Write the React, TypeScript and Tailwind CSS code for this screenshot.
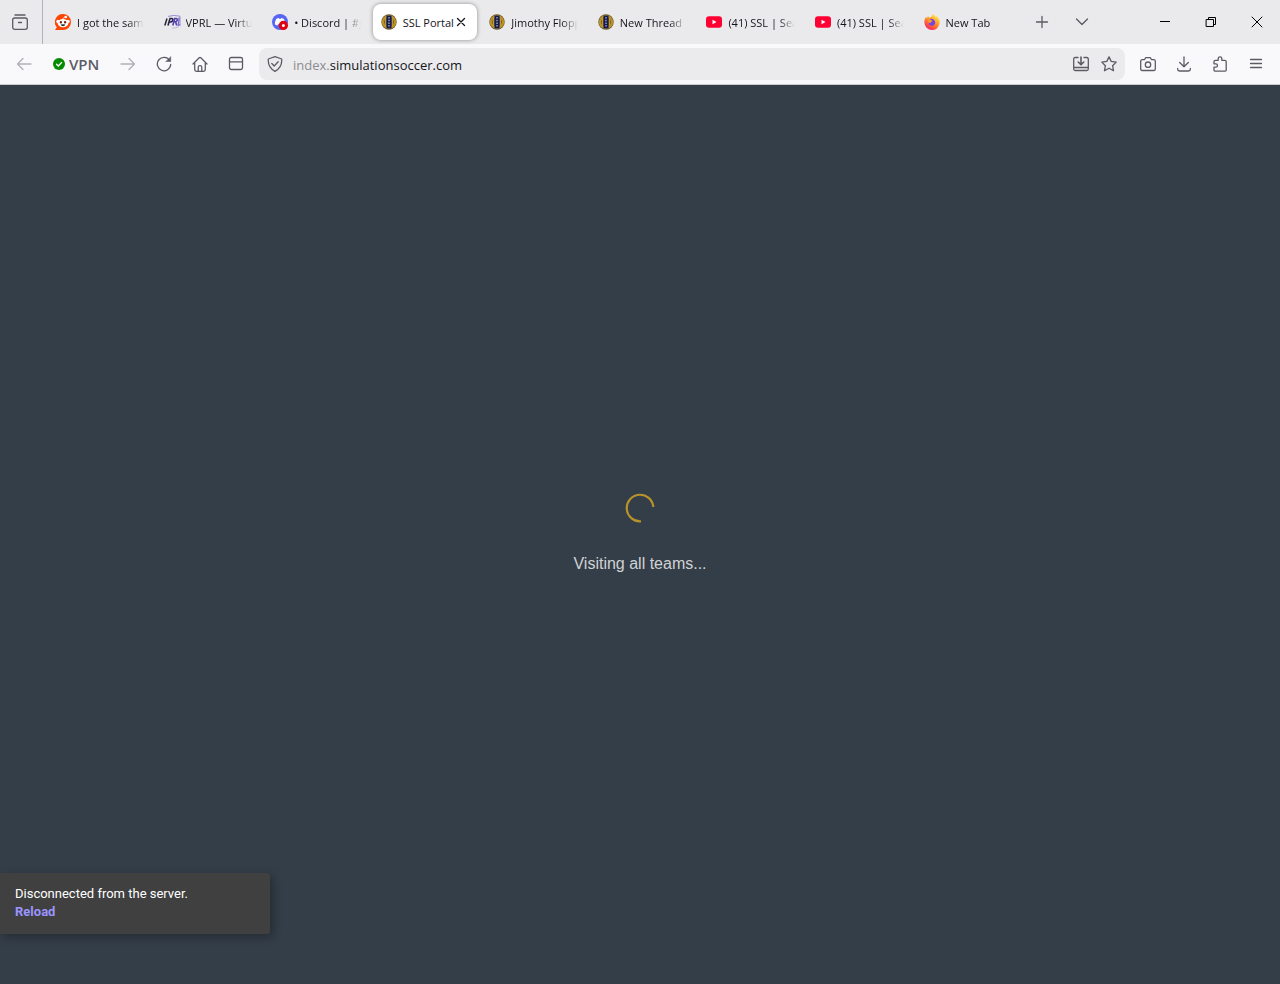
import type { ReactNode } from "react";

function RedditIcon() {
  return (
    <svg width="16" height="16" viewBox="0 0 16 16" className="shrink-0">
      <path d="M8 0a8 8 0 1 1 0 16H.6c-.4 0-.5-.4-.3-.7l1.6-2A8 8 0 0 1 8 0z" fill="#ff4500" />
      <circle cx="2.9" cy="7.4" r="1.6" fill="#fff" />
      <circle cx="13.1" cy="7.4" r="1.6" fill="#fff" />
      <circle cx="10.8" cy="3" r="1.3" fill="#fff" />
      <path d="M8 5.5c.1-1.5.8-2.3 2-2.4" stroke="#fff" strokeWidth=".8" fill="none" />
      <ellipse cx="8" cy="9.2" rx="5.3" ry="4.1" fill="#fff" />
      <ellipse cx="5.9" cy="8.3" rx="1.1" ry="1.3" fill="#7a1c08" />
      <ellipse cx="10.1" cy="8.3" rx="1.1" ry="1.3" fill="#7a1c08" />
      <path d="M5.6 10.6q2.4-.6 4.8 0-.6 1.7-2.4 1.7t-2.4-1.7z" fill="#26343a" />
    </svg>
  );
}

function VprlIcon() {
  return (
    <svg width="17" height="16" viewBox="0 0 17 16" className="-mr-px shrink-0" fill="none">
      <path d="M4 2.4Q10 .6 16 2.2v8" stroke="#8478c8" strokeWidth=".8" />
      <path d="M.8 11.500 3 4.500" stroke="#25232f" strokeWidth="1.5" />
      <path d="M4 11.500 6 4.500h1.8q1.5.2 1 1.8-.5 1.7-2 1.7H5.3" stroke="#292448" strokeWidth="1.6" />
      <path d="m8.800 11.500 2-7h1.400q1.500.2 1 1.800-.5 1.500-1.800 1.500h-1M11.700 8l1 3.500" stroke="#5442b5" strokeWidth="1.6" />
      <path d="m15.200 3.500-1 7.500h2.300" stroke="#7568c7" strokeWidth="1.4" />
      <path d="M8 14.200q4 .1 7-1.700" stroke="#b0a7dc" strokeWidth=".8" />
    </svg>
  );
}

function DiscordIcon() {
  return (
    <svg width="16" height="16" viewBox="0 0 16 16" className="shrink-0">
      <circle cx="8" cy="8" r="8" fill="#5865f2" />
      <path d="M4.200 5Q5.500 4.200 6.600 4l.5.800h1.800l.5-.8q1.400.3 2.500 1 1.400 2.600 1.300 5.200-1.300 1-2.600 1.300l-.6-1.200H6l-.6 1.200q-1.500-.4-2.600-1.300Q2.700 7.400 4.200 5z" fill="#fff" />
      <circle cx="11.400" cy="11.400" r="4.600" fill="#e3000f" />
      <circle cx="11.400" cy="11.400" r="1.500" fill="#fff" />
    </svg>
  );
}

function SslIcon() {
  return (
    <svg width="16" height="16" viewBox="0 0 16 16" className="shrink-0">
      <circle cx="8" cy="8" r="7.7" fill="#5e5232" />
      <circle cx="8" cy="8" r="6.1" fill="none" stroke="#bd9222" strokeWidth="2.2" />
      <path d="M4.500 3.500v9M11.500 3.500v9" stroke="#c39a2a" strokeWidth="1.500" />
      <path d="M5.500 1.500h5v13h-5z" fill="#151b50" />
      <path d="M8 3v10" stroke="#a7b0cc" strokeWidth="1.300" strokeDasharray="1.500 1.200" />
    </svg>
  );
}

function YouTubeIcon() {
  return (
    <svg width="16" height="16" viewBox="0 0 16 16" className="shrink-0">
      <rect y="2.2" width="16" height="11.5" rx="3" fill="#ff0033" />
      <path d="m6.500 5.700 4 2.300-4 2.300z" fill="#fff" />
    </svg>
  );
}

function FirefoxIcon() {
  return (
    <svg width="16" height="16" viewBox="0 0 16 16" className="shrink-0">
      <defs>
        <linearGradient id="flame" x1=".8" y1="0" x2=".2" y2="1">
          <stop offset="0" stopColor="#fff44f" />
          <stop offset=".4" stopColor="#ffa42a" />
          <stop offset=".7" stopColor="#ff5a3a" />
          <stop offset="1" stopColor="#f5187b" />
        </linearGradient>
      </defs>
      <path d="M8.600 0c1.900.8 2.500 2 3 3.200l.6-1.100c1.900 1.400 3.600 3.600 3.500 6.400A7.600 7.600 0 0 1 .4 8.300C.3 6 1.200 4.100 2 2.800l.7 1.400L4.200 2l1 1.700C7 3.400 8.300 2.300 8.600 0z" fill="url(#flame)" />
      <path d="M5.300 5.200c2.200-1.200 5.900.1 5.900 3.300 0 2-1.500 3.200-3.200 3.200-2.200 0-3.500-1.600-3.300-3.300l2.500-.5z" fill="#7542e5" />
      <path d="M3.500 6c1.500-1.300 3-.8 3.700.2l1.400.2c-.3 1-1.500 1.200-1.700 1.900-.2.900-1.600.9-2 .4z" fill="#ff9a22" />
    </svg>
  );
}

function Glyph({ children, className = "text-[#5b5b66]" }: { children: ReactNode; className?: string }) {
  return (
    <svg
      width="16"
      height="16"
      viewBox="0 0 16 16"
      fill="none"
      stroke="currentColor"
      strokeWidth="1.3"
      strokeLinecap="round"
      strokeLinejoin="round"
      className={`shrink-0 ${className}`}
    >
      {children}
    </svg>
  );
}

const tabs = [
  { title: "I got the same", icon: <RedditIcon /> },
  { title: "VPRL — Virtual", icon: <VprlIcon /> },
  { title: "• Discord | #general", icon: <DiscordIcon /> },
  { title: "SSL Portal", icon: <SslIcon />, active: true },
  { title: "Jimothy Floppy", icon: <SslIcon /> },
  { title: "New Thread", icon: <SslIcon /> },
  { title: "(41) SSL | Season", icon: <YouTubeIcon /> },
  { title: "(41) SSL | Season", icon: <YouTubeIcon /> },
  { title: "New Tab", icon: <FirefoxIcon /> },
];

function Tab({ title, icon, active }: { title: string; icon: ReactNode; active?: boolean }) {
  return (
    <div
      className={`mx-0.5 flex h-9 min-w-0 flex-1 items-center rounded-lg px-2 ${
        active ? "bg-white shadow-[0_0_4px_rgba(0,0,0,0.4)]" : ""
      }`}
    >
      <button
        type="button"
        role="tab"
        aria-selected={!!active}
        className="flex min-w-0 flex-1 items-center gap-1.5 text-left"
      >
        {icon}
        <span
          className={`min-w-0 flex-1 whitespace-nowrap pt-0.5 ${
            active ? "" : "overflow-hidden [mask-image:linear-gradient(to_left,transparent,black_16px)]"
          }`}
        >
          {title}
        </span>
      </button>
      {active && (
        <button type="button" aria-label="Close tab" className="flex w-4 justify-center">
          <Glyph className="text-[#15141a]">
            <path d="m4.500 4.500 7 7m0-7-7 7" />
          </Glyph>
        </button>
      )}
    </div>
  );
}

function IconButton({ label, className = "w-9", children }: { label: string; className?: string; children: ReactNode }) {
  return (
    <button type="button" aria-label={label} className={`flex h-8 shrink-0 items-center justify-center ${className}`}>
      {children}
    </button>
  );
}

function TabStrip() {
  return (
    <div className="flex h-11 items-center bg-[#eaeaec] text-[11px] leading-4 text-[#15141a]">
      <div className="mr-0.5 flex h-full w-[43px] shrink-0 items-center border-r border-[#b4b4b8]">
        <IconButton label="Recent browsing" className="w-10">
          <Glyph>
            <path d="M3 1h10" />
            <rect x=".7" y="4" width="14.6" height="11.3" rx="2" />
            <path d="M6.500 8.500h3" />
          </Glyph>
        </IconButton>
      </div>
      <div role="tablist" className="flex min-w-0 flex-1">
        {tabs.map((tab, i) => (
          <Tab key={i} {...tab} />
        ))}
      </div>
      <IconButton label="New tab" className="w-10">
        <Glyph>
          <path d="M8 2.500v11M2.500 8h11" />
        </Glyph>
      </IconButton>
      <IconButton label="List all tabs" className="mr-10 w-10">
        <Glyph>
          <path d="m2.500 5 5.500 5.500L13.500 5" />
        </Glyph>
      </IconButton>
      <IconButton label="Minimize" className="w-[46px]">
        <Glyph className="text-black">
          <path d="M3 7.500h10" strokeWidth="1" strokeLinecap="butt" />
        </Glyph>
      </IconButton>
      <IconButton label="Restore" className="w-[46px]">
        <Glyph className="text-black">
          <path d="M3.500 5.500h7v7h-7zM5.500 5.500v-2h7v7h-2" strokeWidth="1" />
        </Glyph>
      </IconButton>
      <IconButton label="Close window" className="w-[46px]">
        <Glyph className="text-black">
          <path d="m3 3 10 10m0-10L3 13" strokeWidth="1" />
        </Glyph>
      </IconButton>
    </div>
  );
}

function Toolbar() {
  return (
    <div className="flex h-[41px] items-center border-b border-[#ccccd0] bg-[#f9f9fb] px-1.5">
      <IconButton label="Back">
        <Glyph className="text-[#b0b0b6]">
          <path d="M15 8H1.500M7 2.500 1.500 8 7 13.500" />
        </Glyph>
      </IconButton>
      <button type="button" className="ml-[11px] flex w-[57px] shrink-0 items-center gap-1">
        <svg width="12" height="12" viewBox="0 0 12 12">
          <circle cx="6" cy="6" r="6" fill="#058b00" />
          <path d="m3.500 6.200 1.800 1.800 3.300-3.500" stroke="#fff" strokeWidth="1.3" fill="none" strokeLinecap="round" />
        </svg>
        <span className="text-[15px] leading-5 font-semibold text-[#5b5b66]">VPN</span>
      </button>
      <IconButton label="Forward">
        <Glyph className="text-[#b0b0b6]">
          <path d="M1 8h13.500M9 2.500 14.500 8 9 13.500" />
        </Glyph>
      </IconButton>
      <IconButton label="Reload">
        <Glyph>
          <path d="M13.700 4.500A6.700 6.700 0 1 0 14.700 8.500" />
          <path d="M14.700 1v4.500h-4.500z" fill="currentColor" strokeWidth=".6" />
        </Glyph>
      </IconButton>
      <IconButton label="Home">
        <Glyph>
          <path d="m1 8 6.200-6.200q.8-.7 1.600 0L15 8M2.700 7v6.500q0 1.800 1.800 1.800h7q1.800 0 1.800-1.800V7M6.200 15v-3.500q0-1.800 1.800-1.800t1.800 1.800V15" />
        </Glyph>
      </IconButton>
      <IconButton label="Sidebar">
        <Glyph>
          <rect x="1.500" y="1.500" width="13" height="12" rx="1.800" />
          <path d="M1.500 5.800h13" />
        </Glyph>
      </IconButton>
      <div className="mx-[5px] flex h-8 min-w-0 flex-1 items-center rounded-lg bg-[#ebebed] px-2">
        <Glyph>
          <path d="M8 .7 14.700 3q.6 8.500-6.700 12.300Q.7 11.500 1.300 3zM4.800 7.500 7.200 10l4-4.300" />
        </Glyph>
        <a href="#" className="ml-2.5 min-w-0 flex-1 truncate pt-0.5 text-[13px] leading-5 text-[#15141a]">
          <span className="text-[#8b8b90]">index.</span>simulationsoccer.com
        </a>
        <div className="flex gap-3">
          <button type="button" aria-label="Install site">
            <Glyph>
              <path d="M5 1.500H2.200q-1.500 0-1.500 1.500v10q0 1.500 1.500 1.500h11.600q1.500 0 1.500-1.500V3q0-1.500-1.500-1.500H11M1 11.500h14" />
              <path d="M8 1v7.500M5.200 6 8 8.800 10.800 6" strokeWidth="1.600" />
            </Glyph>
          </button>
          <button type="button" aria-label="Bookmark this page">
            <Glyph>
              <path d="m8 .9 2.200 4.500 5 .7-3.600 3.600.9 5L8 12.300l-4.500 2.400.9-5L.8 6.100l5-.7z" />
            </Glyph>
          </button>
        </div>
      </div>
      <IconButton label="Screenshot">
        <Glyph>
          <path d="M2.300 3.700h2.200l1.100-2h4.800l1.100 2h2.200q1.600 0 1.600 1.600v7.600q0 1.600-1.600 1.600H2.300q-1.600 0-1.600-1.600V5.300q0-1.600 1.600-1.600z" />
          <circle cx="8" cy="8.700" r="2.700" />
        </Glyph>
      </IconButton>
      <IconButton label="Downloads">
        <Glyph>
          <path d="M8 1v9.500M3.700 6.500 8 10.800l4.300-4.300M1.700 12.500v.8q0 1.700 1.700 1.700h9.200q1.700 0 1.700-1.700v-.8" />
        </Glyph>
      </IconButton>
      <IconButton label="Extensions">
        <Glyph>
          <path d="M3.300 15.200q-1.300 0-1.300-1.300v-2.700h1.800a1.700 1.700 0 0 0 0-3.400H2V5.600q0-1.300 1.300-1.300h2.900V2.600a1.800 1.800 0 0 1 3.600 0v1.700h2.900q1.500 0 1.500 1.300v8.300q0 1.300-1.500 1.300z" />
        </Glyph>
      </IconButton>
      <IconButton label="Open application menu">
        <Glyph>
          <path d="M2.500 3.500h11M2.500 7.500h11M2.500 11.500h11" />
        </Glyph>
      </IconButton>
    </div>
  );
}

export default function App() {
  return (
    <div className="flex min-h-screen flex-col bg-[#343e48] font-['Open_Sans','Noto_Sans',sans-serif]">
      <header>
        <TabStrip />
        <Toolbar />
      </header>
      <main className="relative flex flex-1 flex-col items-center justify-center pb-0.5 font-['Liberation_Sans',Arial,sans-serif]">
        <div role="status" className="flex flex-col items-center gap-7">
          <svg width="32" height="32" viewBox="0 0 32 32" fill="none">
            <path d="M29.300 15A13.300 13.300 0 1 0 17 29.300" stroke="#b8922a" strokeWidth="2.2" />
          </svg>
          <p className="text-base text-[#d0d2d4]">Visiting all teams...</p>
        </div>
        <div
          role="alert"
          className="absolute bottom-[50px] left-0 w-[270px] rounded-r-[3px] bg-[#404040] pb-[13px] pl-[15px] pr-5 pt-3 font-[Roboto,Arial,sans-serif] text-[13px] leading-[18px] text-white shadow-[3px_3px_10px_rgba(0,0,0,0.3)]"
        >
          <p>Disconnected from the server.</p>
          <a href="#" className="font-bold text-[#9a94ff]">
            Reload
          </a>
        </div>
      </main>
    </div>
  );
}
